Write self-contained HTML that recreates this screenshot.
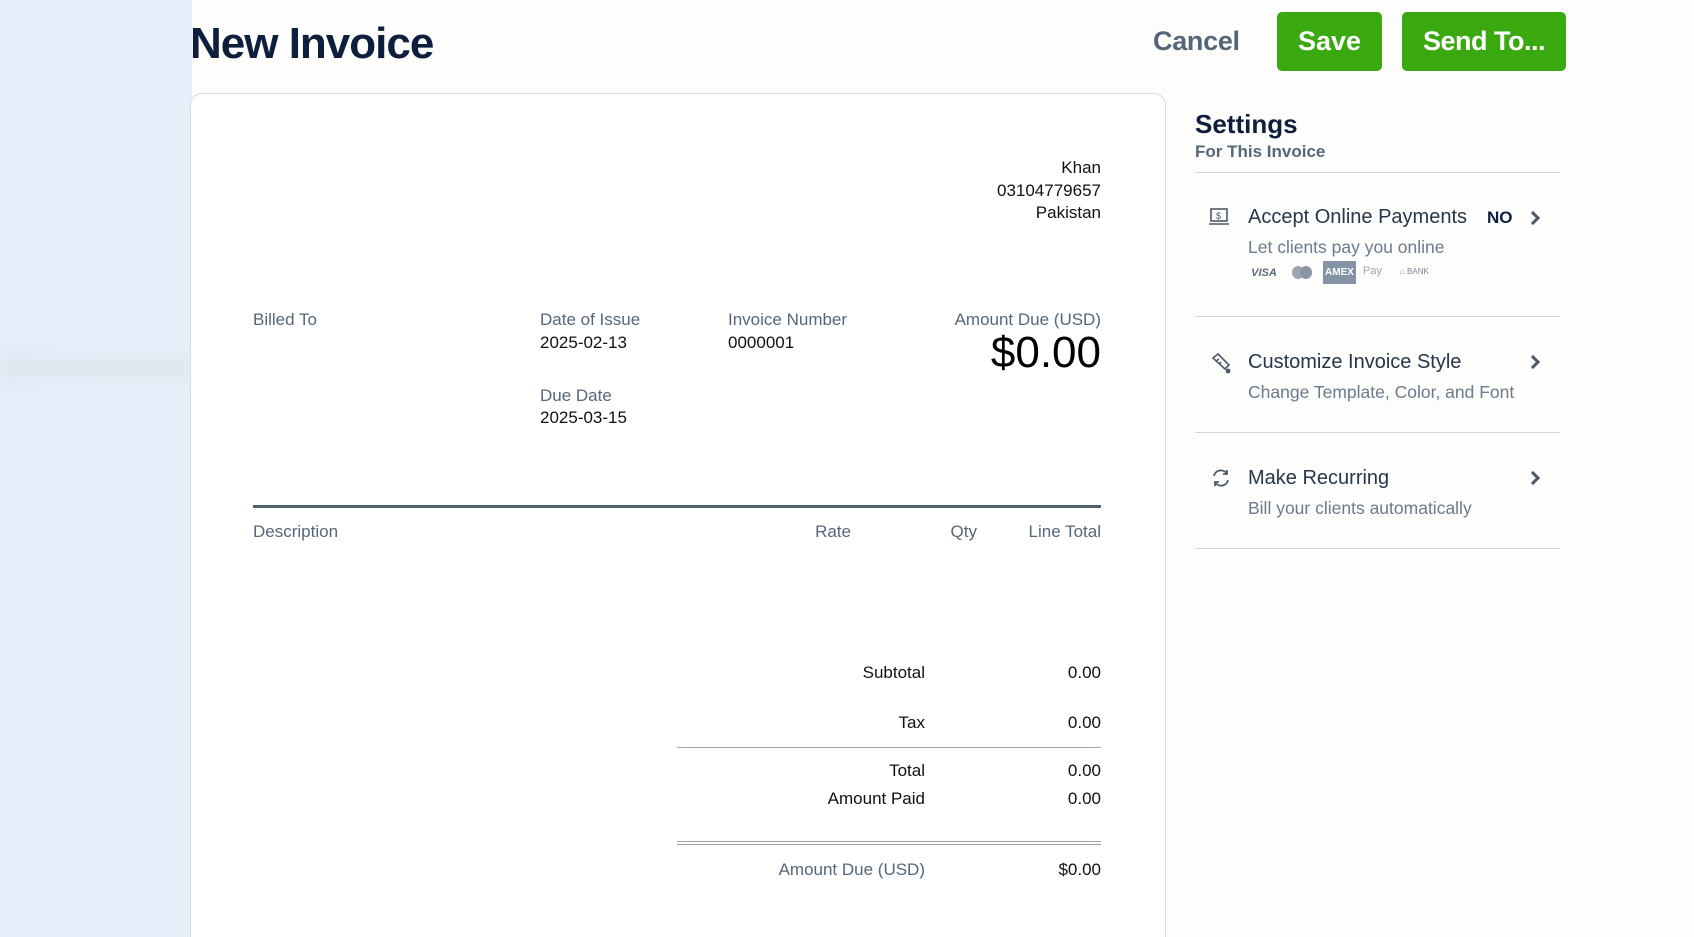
<!DOCTYPE html>
<html style="width:1694px;height:937px;overflow:hidden"><head><meta charset="utf-8"><style>
*{margin:0;padding:0;box-sizing:border-box}
body{width:1694px;height:937px;overflow:hidden;background:#fdfdfc;font-family:"Liberation Sans",sans-serif;position:relative}
.a{position:absolute;white-space:nowrap}
.side{position:absolute;left:0;top:0;width:192px;height:937px;background:linear-gradient(90deg,#e3eef9,#e6eff9)}
.card{position:absolute;left:190px;top:93px;width:976px;height:844px;background:#fff;border:1px solid #d6dbe0;border-bottom:none;border-radius:12px 12px 0 0}
.lab{color:#55677a;font-size:17px}
.val{color:#111;font-size:17px}
.r{text-align:right}
.btn{position:absolute;background:#3aa80f;color:#fff;font-weight:bold;font-size:27px;border-radius:5px;display:flex;align-items:center;justify-content:center}
.st{font-family:"Liberation Sans",sans-serif}
.t1{color:#27364a;font-size:20px}
.t2{color:#6b7a8c;font-size:17.5px}
.hr{position:absolute;left:1195px;width:365px;height:1px;background:#d4d8dc}
.chev{position:absolute;left:1528px;width:10px;height:10px;border-right:3px solid #4b5a6c;border-top:3px solid #4b5a6c;transform:rotate(45deg)}
</style></head><body>
<div class="side">
<div class="a" style="left:0;top:357px;width:190px;height:22px;background:#e0e7f0;filter:blur(5px)"></div>
</div>
<div class="a" style="left:190px;top:19px;font-size:44px;font-weight:bold;color:#0d1f3c;letter-spacing:-1px">New Invoice</div>
<div class="a" style="left:1153px;top:26px;font-size:27px;font-weight:bold;color:#55667a;letter-spacing:-0.3px">Cancel</div>
<div class="btn" style="left:1277px;top:12px;width:105px;height:59px">Save</div>
<div class="btn" style="left:1402px;top:12px;width:164px;height:59px;letter-spacing:-0.5px">Send To...</div>

<div class="card"></div>
<div class="a val r" style="right:593px;top:157px;line-height:22.5px">Khan<br>03104779657<br>Pakistan</div>
<div class="a lab" style="left:253px;top:310px">Billed To</div>
<div class="a lab" style="left:540px;top:310px">Date of Issue</div>
<div class="a val" style="left:540px;top:333px">2025-02-13</div>
<div class="a lab" style="left:540px;top:386px">Due Date</div>
<div class="a val" style="left:540px;top:408px">2025-03-15</div>
<div class="a lab" style="left:728px;top:310px">Invoice Number</div>
<div class="a val" style="left:728px;top:333px">0000001</div>
<div class="a lab r" style="right:593px;top:310px">Amount Due (USD)</div>
<div class="a r" style="right:593px;top:328px;font-size:44px;color:#000">$0.00</div>
<div class="a" style="left:253px;top:505px;width:848px;height:3px;background:#4e6170"></div>
<div class="a lab" style="left:253px;top:522px">Description</div>
<div class="a lab r" style="right:843px;top:522px">Rate</div>
<div class="a lab r" style="right:717px;top:522px">Qty</div>
<div class="a lab r" style="right:593px;top:522px">Line Total</div>
<div class="a val r" style="right:769px;top:663px">Subtotal</div>
<div class="a val r" style="right:593px;top:663px">0.00</div>
<div class="a val r" style="right:769px;top:713px">Tax</div>
<div class="a val r" style="right:593px;top:713px">0.00</div>
<div class="a" style="left:677px;top:747px;width:424px;height:1px;background:#9aa3ab"></div>
<div class="a val r" style="right:769px;top:761px">Total</div>
<div class="a val r" style="right:593px;top:761px">0.00</div>
<div class="a val r" style="right:769px;top:789px">Amount Paid</div>
<div class="a val r" style="right:593px;top:789px">0.00</div>
<div class="a" style="left:677px;top:841px;width:424px;height:4px;border-top:1px solid #9aa3ab;border-bottom:1px solid #9aa3ab"></div>
<div class="a lab r" style="right:769px;top:860px">Amount Due (USD)</div>
<div class="a val r" style="right:593px;top:860px">$0.00</div>

<div class="a st" style="left:1195px;top:109px;font-size:26px;font-weight:bold;color:#0d1f3c">Settings</div>
<div class="a st" style="left:1195px;top:142px;font-size:17px;font-weight:bold;color:#56677a">For This Invoice</div>
<div class="hr" style="top:172px"></div>

<svg class="a" style="left:1208px;top:207px" width="22" height="20" viewBox="0 0 22 20" fill="none" stroke="#4b5a6c" stroke-width="1.6"><rect x="3" y="2" width="16" height="12"/><path d="M1 17h20"/><text x="8" y="12" font-size="9" fill="#4b5a6c" stroke="none" font-family="Liberation Sans">$</text></svg>
<div class="a st t1" style="left:1248px;top:206px">Accept Online Payments</div>
<div class="a st" style="left:1487px;top:208px;font-size:17px;font-weight:bold;color:#0d1f3c">NO</div>
<div class="chev" style="top:213px"></div>
<div class="a st t2" style="left:1248px;top:237px">Let clients pay you online</div>
<div class="a" style="left:1248px;top:263px;width:32px;height:20px;font:italic bold 11px 'Liberation Sans';color:#5a6a7b;text-align:center;line-height:20px">VISA</div>
<div class="a" style="left:1292px;top:266px;width:12px;height:13px;border-radius:50%;background:#9aa5b1"></div>
<div class="a" style="left:1300px;top:266px;width:12px;height:13px;border-radius:50%;background:#8a96a3"></div>
<div class="a" style="left:1323px;top:261px;width:33px;height:23px;background:#8594a5;color:#fff;font:bold 10px 'Liberation Sans';text-align:center;line-height:23px">AMEX</div>
<div class="a" style="left:1363px;top:265px;font-size:11px;color:#9aa5b1"> Pay</div>
<div class="a" style="left:1400px;top:267px;font-size:8px;color:#7b8896">⌂ BANK</div>
<div class="hr" style="top:316px"></div>

<svg class="a" style="left:1210px;top:352px" width="22" height="22" viewBox="0 0 22 22" fill="none" stroke="#4b5a6c" stroke-width="1.6"><path d="M3 6l5-4 11 11-4 4z"/><path d="M6 9l3-2M9 12l2-2"/><circle cx="18" cy="19" r="1.6" fill="#4b5a6c"/></svg>
<div class="a st t1" style="left:1248px;top:351px">Customize Invoice Style</div>
<div class="chev" style="top:357px"></div>
<div class="a st t2" style="left:1248px;top:382px">Change Template, Color, and Font</div>
<div class="hr" style="top:432px"></div>

<svg class="a" style="left:1210px;top:467px" width="22" height="22" viewBox="0 0 22 22" fill="none" stroke="#4b5a6c" stroke-width="1.8"><path d="M4 9a7 7 0 0 1 13-2"/><path d="M18 13a7 7 0 0 1-13 2"/><path d="M17 3v4h-4M5 19v-4h4"/></svg>
<div class="a st t1" style="left:1248px;top:467px">Make Recurring</div>
<div class="chev" style="top:473px"></div>
<div class="a st t2" style="left:1248px;top:498px">Bill your clients automatically</div>
<div class="hr" style="top:548px"></div>
</body></html>
